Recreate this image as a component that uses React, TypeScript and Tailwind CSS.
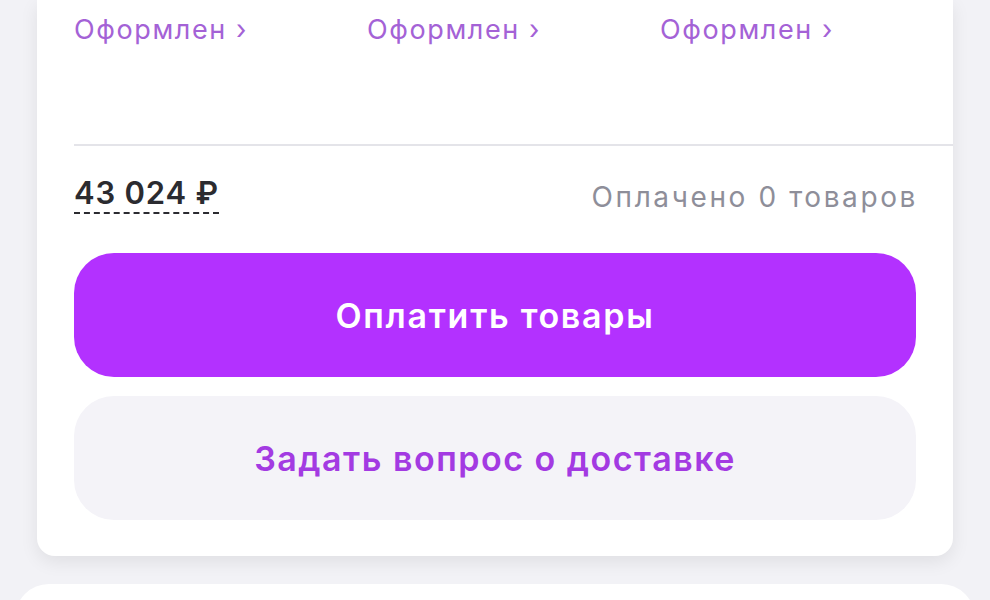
import React from 'react';

export default function App() {
    const statuses = ["Оформлен", "Оформлен", "Оформлен"];

    return (
        <div className="w-[990px] h-[600px] overflow-hidden bg-[#f2f2f6] font-['Inter',sans-serif]">
            <div className="mx-[37px] bg-white rounded-b-[18px] shadow-[0_6px_18px_rgba(0,0,0,0.08)]">
                <div className="flex pl-[37px] pt-[10px] h-[144px]">
                    {statuses.map((s, i) => (
                        <div key={i} className="w-[296px] text-[27px] leading-[40px] tracking-[1.6px] text-[#a462d6]">
                            {s} ›
                        </div>
                    ))}
                </div>
                <div className="ml-[37px] h-[2px] bg-[#e4e4e9]" />
                <div className="px-[37px] pt-[26px] pb-[36px]">
                    <div className="flex items-center justify-between h-[44px]">
                        <span className="text-[31px] font-semibold text-[#2b2b30] border-b-2 border-dashed border-[#2b2b30] leading-[38px] tracking-[0.8px]">
                            43 024 ₽
                        </span>
                        <span className="text-[28px] tracking-[2.6px] text-[#8e8e99] mt-[6px] -mr-[2px]">Оплачено 0 товаров</span>
                    </div>
                    <button className="mt-[37px] w-full h-[124px] rounded-[40px] bg-[#b331ff] text-white text-[34px] font-semibold tracking-[1.7px]">
                        Оплатить товары
                    </button>
                    <button className="mt-[19px] w-full h-[124px] rounded-[40px] bg-[#f4f3f8] text-[#a33ae2] text-[34px] font-semibold tracking-[1.5px]">
                        Задать вопрос о доставке
                    </button>
                </div>
            </div>
            <div className="mt-[28px] mx-[15px] h-[80px] bg-white rounded-t-[34px]" />
        </div>
    );
}
